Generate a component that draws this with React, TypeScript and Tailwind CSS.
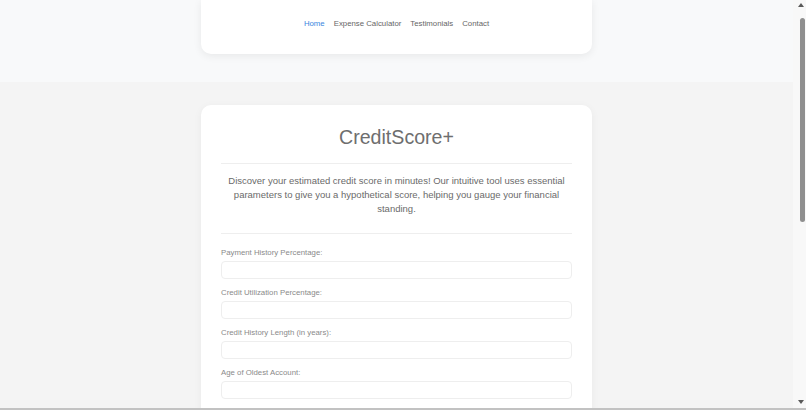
import { useState } from "react";

const fields = [
  { id: "paymentHistory", label: "Payment History Percentage:" },
  { id: "utilization", label: "Credit Utilization Percentage:" },
  { id: "historyLength", label: "Credit History Length (in years):" },
  { id: "oldestAccount", label: "Age of Oldest Account:" },
  { id: "inquiries", label: "Number of Recent Inquiries:" },
  { id: "accounts", label: "Number of Open Accounts:" },
];

const links = ["Home", "Expense Calculator", "Testimonials", "Contact"];

// thin rail on the right side of the frame
function ScrollRail() {
  return (
    <div
      aria-hidden
      className="flex w-[13px] shrink-0 flex-col items-end bg-[#f8f8f8] pr-[1px]"
    >
      <div className="mr-[1px] mt-[3px] h-0 w-0 border-x-[3px] border-b-[4px] border-x-transparent border-b-[#5a5a5a]" />
      <div className="mt-[11px] h-[204px] w-[5px] rounded-full bg-[#8f8f8f]" />
      <div className="flex-1" />
      <div className="mb-[4px] mr-[1px] h-0 w-0 border-x-[3px] border-t-[4px] border-x-transparent border-t-[#5a5a5a]" />
    </div>
  );
}

export default function App() {
  const [values, setValues] = useState<Record<string, string>>({});
  const [score, setScore] = useState<number | null>(null);

  const calculate = () => {
    const n = (k: string) => parseFloat(values[k] || "0") || 0;
    const raw =
      300 +
      n("paymentHistory") * 3.5 -
      n("utilization") * 1.5 +
      n("historyLength") * 8 +
      n("oldestAccount") * 4 -
      n("inquiries") * 10 +
      n("accounts") * 5;
    setScore(Math.max(300, Math.min(850, Math.round(raw))));
  };

  return (
    <div className="flex h-[410px] flex-col font-['Liberation_Sans',Arial,sans-serif] antialiased">
      <div className="flex min-h-0 flex-1">
        <div className="min-w-0 flex-1 overflow-hidden bg-[#f4f4f4]">
          <div className="pb-[60px]">
            <header className="h-[82px] bg-[#f8f9fa]">
              <nav className="mx-auto flex h-[54px] w-[391px] items-center justify-center gap-[9px] rounded-b-[10px] bg-white pb-[6px] shadow-[0_2px_8px_rgba(0,0,0,0.07)]">
                {links.map((l, i) => (
                  <a
                    key={l}
                    href="#"
                    className={`text-[7.8px] leading-[10px] ${
                      i === 0 ? "text-[#3b86e0]" : "text-[#666]"
                    }`}
                  >
                    {l}
                  </a>
                ))}
              </nav>
            </header>

            <main className="pt-[23px]">
              <section className="mx-auto w-[391px] rounded-[10px] bg-white px-[20px] pb-[24px] pt-[20px] shadow-[0_2px_8px_rgba(0,0,0,0.05)]">
                <h1 className="text-center text-[19.6px] leading-[24px] text-[#6e6e6e]">
                  CreditScore+
                </h1>
                <div className="mt-[14px] border-t border-[#eee]" />
                <p className="mt-[10px] px-[2px] text-center text-[9.5px] leading-[14px] text-[#6a6a6a]">
                  Discover your estimated credit score in minutes! Our intuitive
                  tool uses essential parameters to give you a hypothetical
                  score, helping you gauge your financial standing.
                </p>
                <div className="mt-[17px] border-t border-[#eee]" />

                <form
                  className="mt-[14px] flex flex-col gap-[9px]"
                  onSubmit={(e) => {
                    e.preventDefault();
                    calculate();
                  }}
                >
                  {fields.map((f) => (
                    <div key={f.id} className="flex flex-col gap-[3px]">
                      <label
                        htmlFor={f.id}
                        className="text-[7.8px] leading-[10px] text-[#8a8a8a]"
                      >
                        {f.label}
                      </label>
                      <input
                        id={f.id}
                        type="number"
                        value={values[f.id] || ""}
                        onChange={(e) =>
                          setValues({ ...values, [f.id]: e.target.value })
                        }
                        className="h-[18px] w-full rounded-[4px] border border-[#eeeeee] bg-white px-[6px] text-[8px] outline-none"
                      />
                    </div>
                  ))}
                  <button
                    type="submit"
                    className="mt-[8px] h-[24px] rounded-[4px] bg-[#3b86e0] text-[8px] text-white"
                  >
                    Calculate Score
                  </button>
                </form>

                {score !== null && (
                  <p className="mt-[12px] text-center text-[10px] text-[#555]">
                    Your estimated score: {score}
                  </p>
                )}
              </section>
            </main>
          </div>
        </div>
        <ScrollRail />
      </div>
      <div className="h-[2px] shrink-0 bg-[#c2c2c2]" />
    </div>
  );
}
